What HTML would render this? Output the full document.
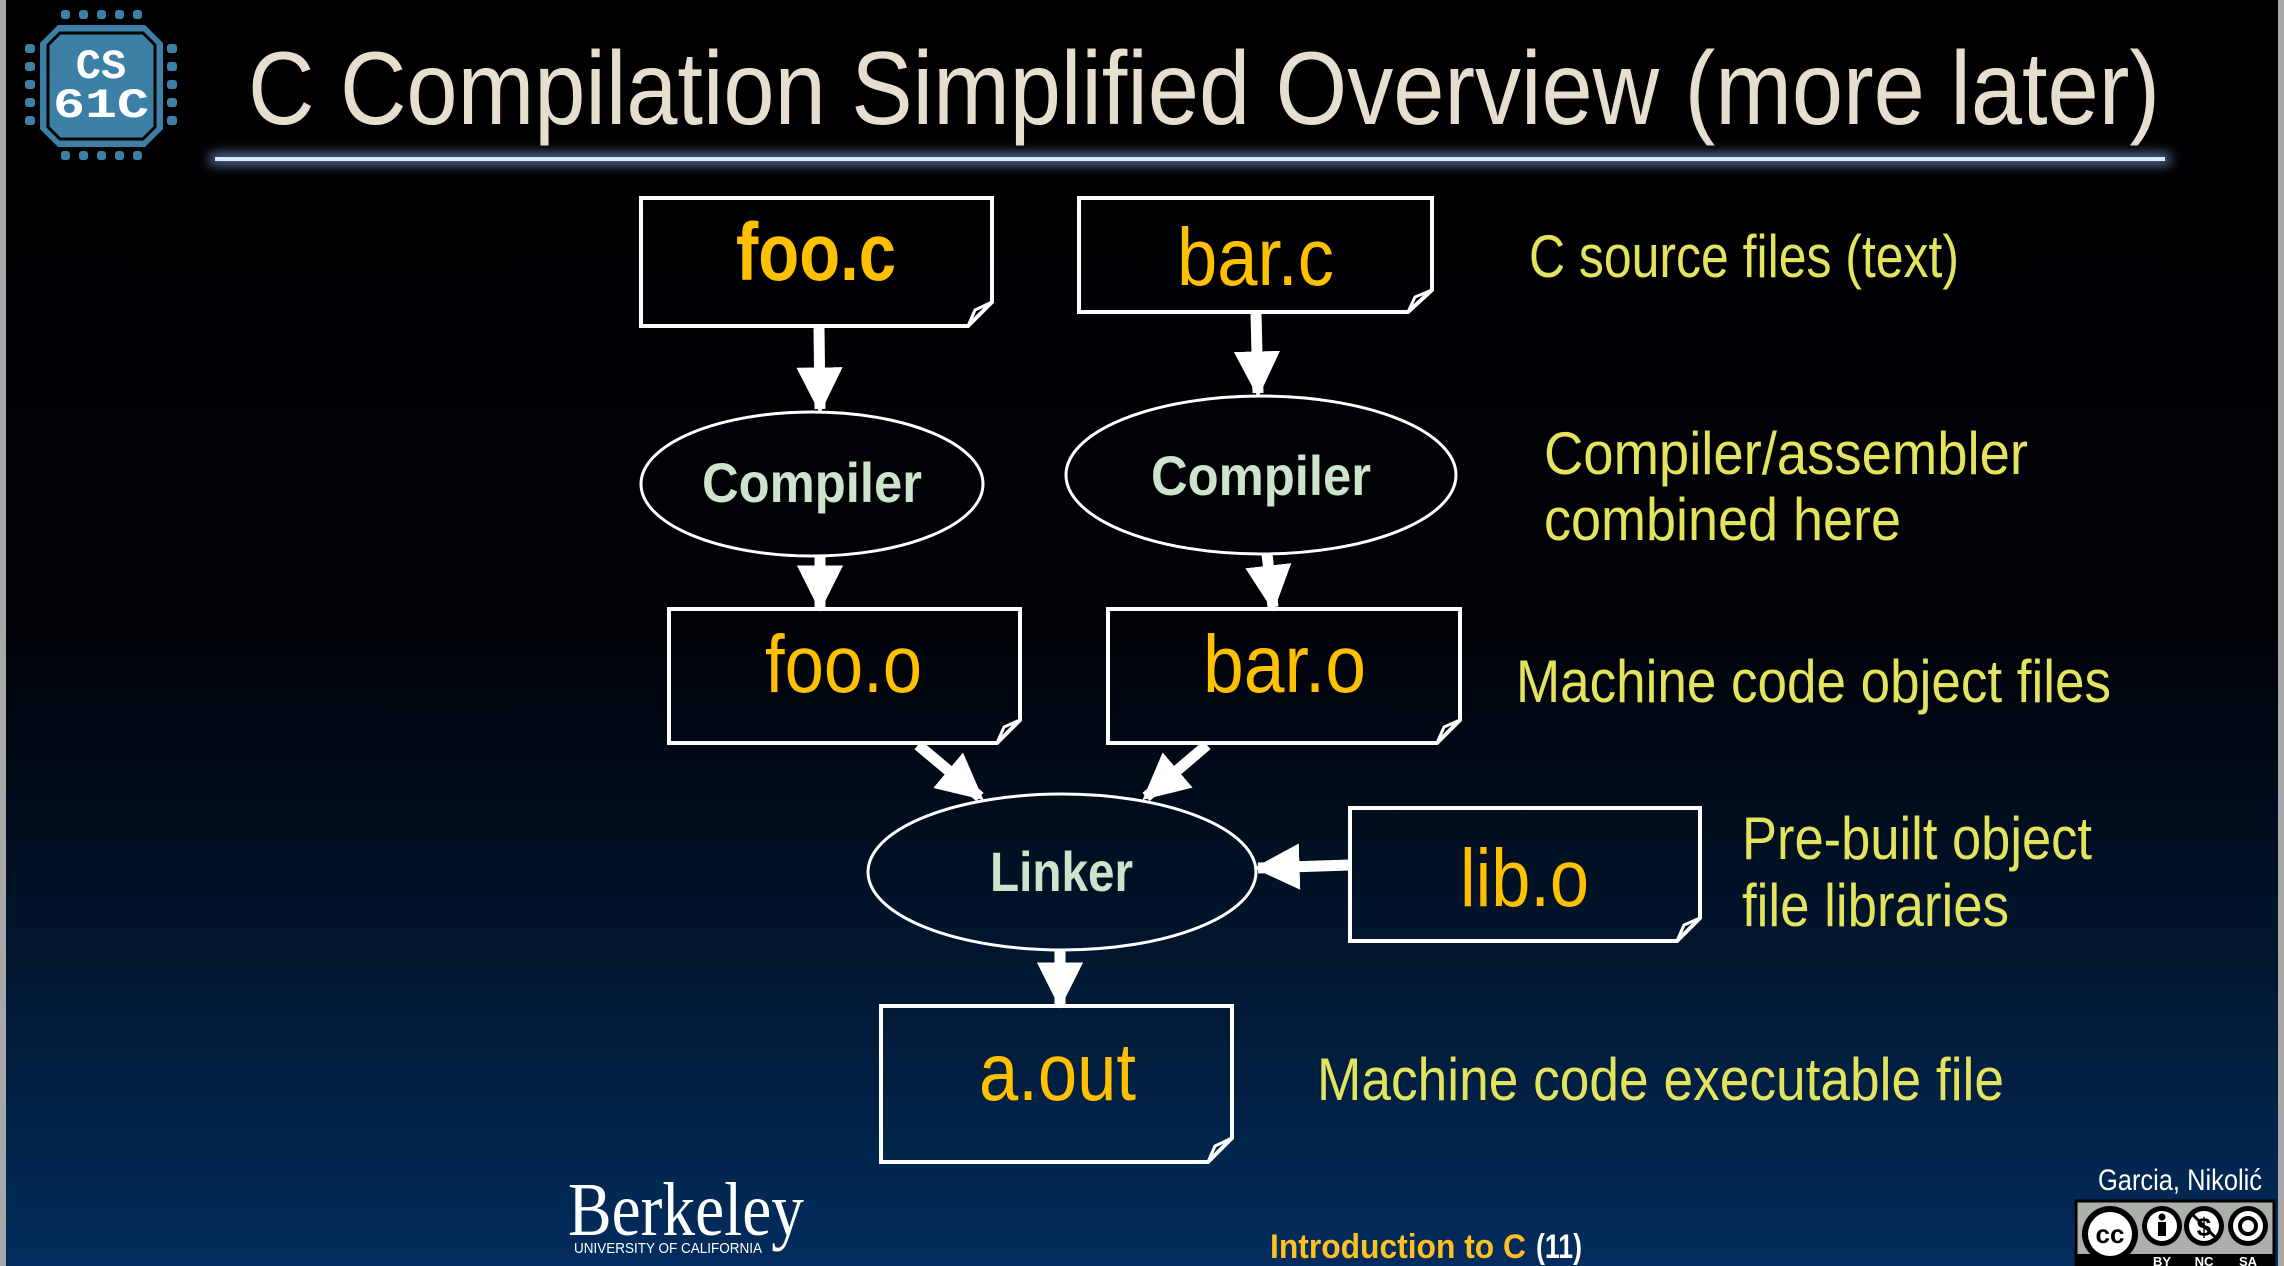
<!DOCTYPE html>
<html><head><meta charset="utf-8"><style>
html,body{margin:0;padding:0;background:#000}
body{width:2284px;height:1266px;overflow:hidden}
svg{display:block}
</style></head><body>
<svg width="2284" height="1266" viewBox="0 0 2284 1266" xmlns="http://www.w3.org/2000/svg" font-family="Liberation Sans, sans-serif">
<defs>
<linearGradient id="bg" x1="0" y1="0" x2="0" y2="1">
<stop offset="0" stop-color="#000"/>
<stop offset="0.5" stop-color="#000208"/>
<stop offset="0.75" stop-color="#01162e"/>
<stop offset="1" stop-color="#032d5e"/>
</linearGradient>
<filter id="glow" x="-5%" y="-300%" width="110%" height="700%"><feGaussianBlur stdDeviation="6"/></filter>
<marker id="ah" viewBox="0 0 10 10" refX="9" refY="5" markerWidth="4.2" markerHeight="4.2" orient="auto" markerUnits="strokeWidth"><path d="M0,0 L10,5 L0,10 z" fill="#fff"/></marker>
</defs>
<rect width="2284" height="1266" fill="url(#bg)"/>
<rect x="0" y="0" width="6" height="1266" fill="#a8a8a8"/>
<rect x="2278" y="0" width="6" height="1266" fill="#a8a8a8"/>

<!-- logo -->
<g fill="#3d80a6">
<rect x="61" y="10" width="9" height="9" rx="3"/><rect x="79" y="10" width="9" height="9" rx="3"/><rect x="97" y="10" width="9" height="9" rx="3"/><rect x="115" y="10" width="9" height="9" rx="3"/><rect x="133" y="10" width="9" height="9" rx="3"/>
<rect x="61" y="151" width="9" height="9" rx="3"/><rect x="79" y="151" width="9" height="9" rx="3"/><rect x="97" y="151" width="9" height="9" rx="3"/><rect x="115" y="151" width="9" height="9" rx="3"/><rect x="133" y="151" width="9" height="9" rx="3"/>
<rect x="25" y="44" width="10" height="9" rx="3"/><rect x="25" y="62" width="10" height="9" rx="3"/><rect x="25" y="80" width="10" height="9" rx="3"/><rect x="25" y="98" width="10" height="9" rx="3"/><rect x="25" y="116" width="10" height="9" rx="3"/>
<rect x="167" y="44" width="10" height="9" rx="3"/><rect x="167" y="62" width="10" height="9" rx="3"/><rect x="167" y="80" width="10" height="9" rx="3"/><rect x="167" y="98" width="10" height="9" rx="3"/><rect x="167" y="116" width="10" height="9" rx="3"/>
<path d="M58,25 L145,25 L163,43 L163,129 L145,147 L58,147 L40,129 L40,43 z"/>
</g>
<path d="M60,33 L143,33 L155,45 L155,127 L143,139 L60,139 L48,127 L48,45 z" fill="#3d80a6" stroke="#000" stroke-width="3"/>
<text x="101" y="78" text-anchor="middle" font-family="Liberation Mono, monospace" font-weight="bold" font-size="42" fill="#fff">CS</text>
<text x="101" y="117" text-anchor="middle" font-family="Liberation Mono, monospace" font-weight="bold" font-size="42" fill="#fff" textLength="96" lengthAdjust="spacingAndGlyphs">61C</text>

<!-- title -->
<text x="248" y="124" font-size="104" fill="#e6dfd0" textLength="1912" lengthAdjust="spacingAndGlyphs">C Compilation Simplified Overview (more later)</text>
<rect x="210" y="154" width="1960" height="10" fill="#6b88b8" filter="url(#glow)"/>
<rect x="215" y="157" width="1950" height="4" fill="#d6e8ff"/>

<!-- boxes -->
<g fill="none" stroke="#fff" stroke-width="4">
<path d="M641,198 L992,198 L992,302 L968,326 L641,326 z"/>
<path d="M1079,198 L1432,198 L1432,290 L1408,312 L1079,312 z"/>
<path d="M669,609 L1020,609 L1020,720 L997,743 L669,743 z"/>
<path d="M1108,609 L1460,609 L1460,720 L1437,743 L1108,743 z"/>
<path d="M1350,808 L1700,808 L1700,918 L1677,941 L1350,941 z"/>
<path d="M881,1006 L1232,1006 L1232,1138 L1208,1162 L881,1162 z"/>
<path d="M992,302 L975,310 L968,326 M1432,290 L1415,297 L1408,312 M1020,720 L1004,727 L997,743 M1460,720 L1444,727 L1437,743 M1700,918 L1684,925 L1677,941 M1232,1138 L1215,1146 L1208,1162" stroke-width="3"/>
<ellipse cx="812" cy="484" rx="171" ry="72" stroke-width="3"/>
<ellipse cx="1261" cy="475" rx="195" ry="79" stroke-width="3"/>
<ellipse cx="1062" cy="872" rx="194" ry="78" stroke-width="3"/>
</g>

<!-- arrows -->
<g stroke="#fff" stroke-width="11" fill="none" marker-end="url(#ah)">
<line x1="819" y1="328" x2="820" y2="409"/>
<line x1="1256" y1="314" x2="1258" y2="393"/>
<line x1="820" y1="557" x2="820" y2="607"/>
<line x1="1267" y1="554" x2="1273" y2="607"/>
<line x1="918" y1="745" x2="980" y2="797"/>
<line x1="1207" y1="745" x2="1146" y2="797"/>
<line x1="1350" y1="865" x2="1258" y2="868"/>
<line x1="1060" y1="951" x2="1060" y2="1004"/>
</g>

<!-- box text -->
<g fill="#ffc000" font-size="82">
<text x="736" y="280" font-weight="bold" textLength="160" lengthAdjust="spacingAndGlyphs">foo.c</text>
<text x="1177" y="285" textLength="157" lengthAdjust="spacingAndGlyphs">bar.c</text>
<text x="765" y="692" textLength="157" lengthAdjust="spacingAndGlyphs">foo.o</text>
<text x="1203" y="692" textLength="163" lengthAdjust="spacingAndGlyphs">bar.o</text>
<text x="1460" y="906" textLength="129" lengthAdjust="spacingAndGlyphs">lib.o</text>
<text x="979" y="1100" textLength="157" lengthAdjust="spacingAndGlyphs">a.out</text>
</g>
<g fill="#cde3cc" font-size="56" font-weight="bold">
<text x="702" y="502" textLength="220" lengthAdjust="spacingAndGlyphs">Compiler</text>
<text x="1151" y="495" textLength="220" lengthAdjust="spacingAndGlyphs">Compiler</text>
<text x="990" y="891" textLength="143" lengthAdjust="spacingAndGlyphs">Linker</text>
</g>

<!-- labels -->
<g fill="#e3e35e" font-size="60">
<text x="1529" y="277" textLength="430" lengthAdjust="spacingAndGlyphs">C source files (text)</text>
<text x="1544" y="474" textLength="484" lengthAdjust="spacingAndGlyphs">Compiler/assembler</text>
<text x="1544" y="540" textLength="357" lengthAdjust="spacingAndGlyphs">combined here</text>
<text x="1516" y="702" textLength="595" lengthAdjust="spacingAndGlyphs">Machine code object files</text>
<text x="1742" y="859" textLength="350" lengthAdjust="spacingAndGlyphs">Pre-built object</text>
<text x="1742" y="926" textLength="267" lengthAdjust="spacingAndGlyphs">file libraries</text>
<text x="1317" y="1100" textLength="687" lengthAdjust="spacingAndGlyphs">Machine code executable file</text>
</g>

<!-- footer -->
<text x="568" y="1235" font-family="Liberation Serif, serif" font-size="76" fill="#fff" textLength="236" lengthAdjust="spacingAndGlyphs">Berkeley</text>
<text x="574" y="1253" font-size="15" fill="#fff" textLength="188" lengthAdjust="spacingAndGlyphs">UNIVERSITY OF CALIFORNIA</text>
<text x="1270" y="1258" font-size="34" font-weight="bold" fill="#ffc020" textLength="256" lengthAdjust="spacingAndGlyphs">Introduction to C</text>
<text x="1536" y="1258" font-size="34" font-weight="bold" fill="#fff" textLength="46" lengthAdjust="spacingAndGlyphs">(11)</text>
<text x="2098" y="1190" font-size="30" fill="#fff" textLength="164" lengthAdjust="spacingAndGlyphs">Garcia, Nikolić</text>

<!-- CC badge -->
<rect x="2076" y="1201" width="198" height="65" fill="#abb1aa" stroke="#000" stroke-width="3"/>
<rect x="2076" y="1254" width="198" height="12" fill="#000"/>
<circle cx="2110" cy="1234" r="28" fill="#000"/><circle cx="2110" cy="1234" r="22" fill="#fff"/>
<text x="2110" y="1243" text-anchor="middle" font-size="26" font-weight="bold" fill="#000">cc</text>
<circle cx="2162" cy="1226" r="20" fill="#000"/><circle cx="2162" cy="1226" r="15" fill="#fff"/>
<circle cx="2162" cy="1217" r="3.5" fill="#000"/><rect x="2158" y="1222" width="8" height="14" fill="#000"/>
<circle cx="2204" cy="1226" r="20" fill="#000"/><circle cx="2204" cy="1226" r="15" fill="#fff"/>
<text x="2204" y="1236" text-anchor="middle" font-size="26" font-weight="bold" fill="#000">$</text>
<line x1="2192" y1="1214" x2="2216" y2="1238" stroke="#000" stroke-width="3"/>
<circle cx="2248" cy="1226" r="20" fill="#000"/><circle cx="2248" cy="1226" r="15" fill="#fff"/>
<circle cx="2248" cy="1226" r="8" fill="none" stroke="#000" stroke-width="4"/>
<text x="2162" y="1266" text-anchor="middle" font-size="13" font-weight="bold" fill="#fff">BY</text>
<text x="2204" y="1266" text-anchor="middle" font-size="13" font-weight="bold" fill="#fff">NC</text>
<text x="2248" y="1266" text-anchor="middle" font-size="13" font-weight="bold" fill="#fff">SA</text>
</svg>
</body></html>
